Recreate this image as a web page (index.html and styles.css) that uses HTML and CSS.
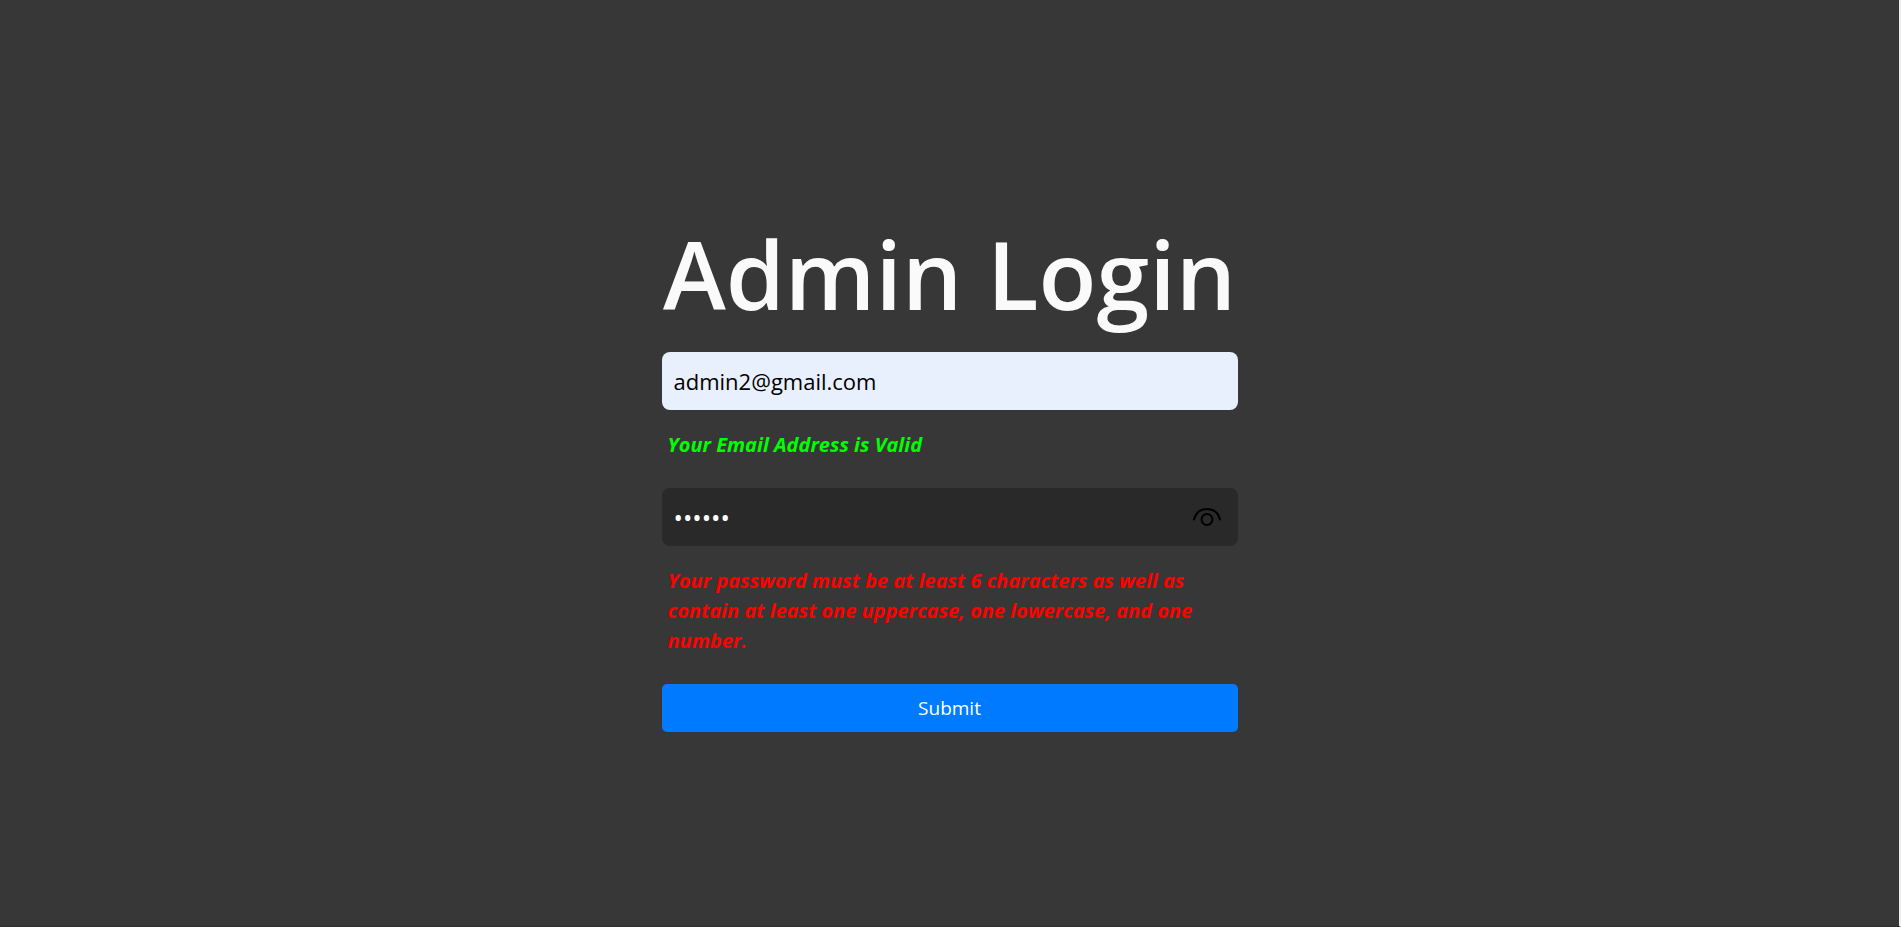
FILE: index.html
```html
<!DOCTYPE html>
<html lang="en">
<head>
<meta charset="utf-8">
<meta name="viewport" content="width=device-width, initial-scale=1">
<title>Admin Login</title>
<link rel="stylesheet" href="styles.css">
</head>
<body>
<main class="page">
  <form class="login">
    <h1 class="login-title">Admin Login</h1>
    <input class="field field-email" type="email" aria-label="Email address" aria-describedby="email-message" value="admin2@gmail.com">
    <p class="message message-valid" id="email-message">Your Email Address is Valid</p>
    <div class="password-box">
      <input class="field field-password" type="password" aria-label="Password" aria-describedby="password-message" value="Admin2">
      <button class="reveal" type="button" aria-label="Show password">
        <svg class="reveal-icon" viewBox="0 0 30 20" fill="none" stroke="#000" stroke-width="2" aria-hidden="true">
          <path d="M1.800 13.200C3.500 6 8.600 2 15 2s11.500 4 13.200 11.200"/>
          <circle cx="15" cy="12.500" r="5.500"/>
        </svg>
      </button>
    </div>
    <p class="message message-error" id="password-message">Your password must be at least 6 characters as well as contain at least one uppercase, one lowercase, and one number.</p>
    <button class="submit" type="submit">Submit</button>
  </form>
</main>
</body>
</html>
```
FILE: styles.css
```css
* {
  box-sizing: border-box;
}

body {
  margin: 0;
  background: #373737;
  color: #fafafa;
  font-family: "Open Sans", "Noto Sans", sans-serif;
}

.page {
  display: flex;
  align-items: center;
  justify-content: center;
  min-height: 100vh;
  border-right: 2px solid #f0f0f0;
  border-bottom: 1px solid #2f2d2e;
}

.login {
  display: flex;
  flex-direction: column;
  width: 100%;
  max-width: 576px;
}

.login-title {
  margin: 0;
  font-size: 95px;
  font-weight: 600;
  line-height: 158px;
  text-align: center;
  white-space: nowrap;
}

.field {
  display: block;
  width: 100%;
  height: 58px;
  padding: 0 12px;
  border: 0;
  border-radius: 8px;
  outline: 0;
  font-family: inherit;
  font-size: 22px;
}

.field-email {
  background: #e8f0fe;
  color: #000;
}

.field-password {
  padding-right: 60px;
  background: #292929;
  color: #fff;
  font-size: 25px;
}

.password-box {
  position: relative;
}

.reveal {
  position: absolute;
  top: 0;
  right: 16px;
  display: flex;
  align-items: center;
  height: 100%;
  padding: 0;
  border: 0;
  background: none;
}

.reveal-icon {
  width: 30px;
  height: 20px;
}

.message {
  margin: 20px 6px 28px;
  font-size: 20px;
  font-style: italic;
  font-weight: 700;
  line-height: 30px;
}

.message-valid {
  color: #0f0;
}

.message-error {
  color: #f00;
}

.submit {
  height: 48px;
  border: 0;
  border-radius: 5px;
  background: #007bff;
  color: #fff;
  font-family: inherit;
  font-size: 19px;
}
```
